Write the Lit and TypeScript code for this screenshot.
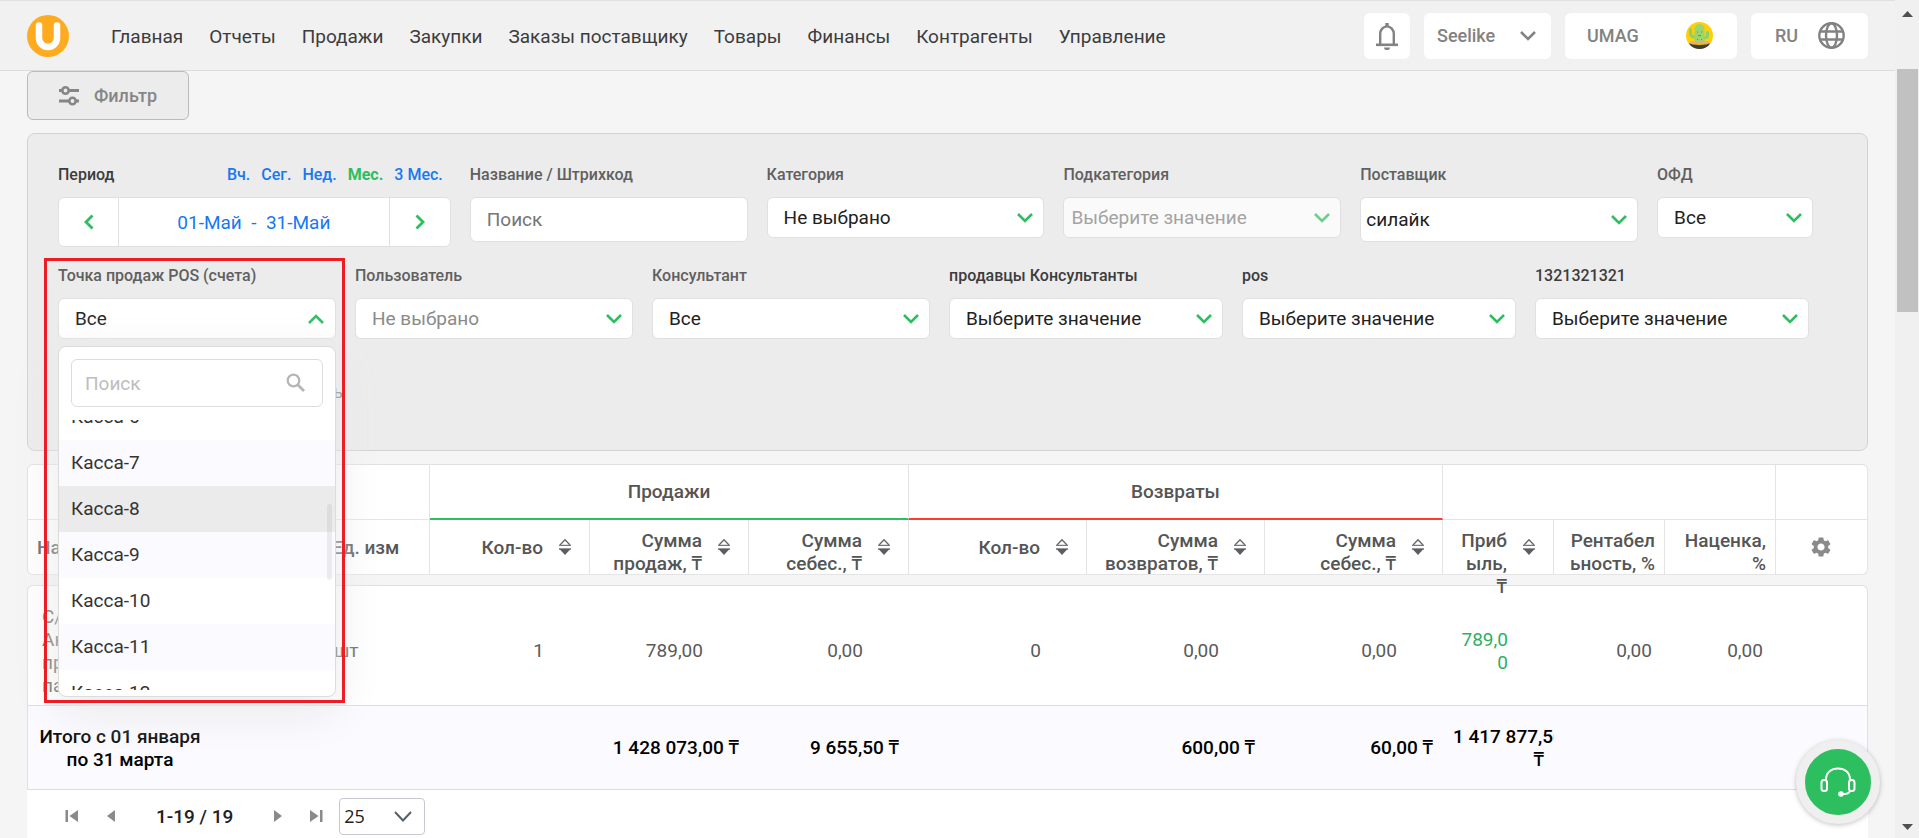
import { LitElement, html, css, svg, nothing } from "lit";
import { customElement, property, query } from "lit/decorators.js";
import { classMap } from "lit/directives/class-map.js";

const chevron = (up = false) => html`
  <svg class="chevron" width="16" height="10" viewBox="0 0 16 10" fill="none" stroke="currentColor" stroke-width="2.6" aria-hidden="true">
    <path d=${up ? "M1 9 8 2l7 7" : "M1 1l7 7 7-7"} />
  </svg>`;

const controlStyles = css`
  * {
    box-sizing: border-box;
  }
  button,
  select,
  input {
    font: inherit;
    color: inherit;
    margin: 0;
  }
  button {
    cursor: pointer;
  }
  .label {
    display: block;
    margin-bottom: 12px;
    font-size: 16px;
    line-height: 20px;
    font-weight: 500;
    color: #606060;
    white-space: nowrap;
  }
  .label.dark {
    color: #3c3c3c;
  }
  .control {
    display: block;
    width: 100%;
    height: 41px;
    padding: 0 16px;
    border: 1px solid #e0e0e0;
    border-radius: 6px;
    background: #fff;
    color: #212121;
    font-size: 19px;
    text-align: left;
    appearance: none;
  }
`;

@customElement("select-field")
class SelectField extends LitElement {
  @property() label = "";
  @property() value = "";
  @property({ type: Boolean }) dark = false;
  @property({ type: Boolean }) muted = false;
  @property({ type: Boolean }) tall = false;
  @property({ type: Boolean }) disabled = false;

  static styles = [
    controlStyles,
    css`
      :host {
        display: block;
        min-width: 0;
      }
      .box {
        display: grid;
        align-items: center;
      }
      .box > * {
        grid-area: 1 / 1;
      }
      .chevron {
        justify-self: end;
        margin-right: 11px;
        color: #2dbe60;
        pointer-events: none;
      }
      .muted {
        color: #8a8a8a;
      }
      .tall {
        height: 45px;
        padding: 0 5px;
      }
      .control:disabled {
        padding: 0 7px;
        background: #fafafa;
        color: #a3a3a3;
        opacity: 1;
      }
      .control:disabled + .chevron {
        opacity: 0.7;
      }
    `,
  ];

  render() {
    return html`
      <label class=${classMap({ label: true, dark: this.dark })} for="s">${this.label}</label>
      <div class="box">
        <select id="s" class=${classMap({ control: true, muted: this.muted, tall: this.tall })} ?disabled=${this.disabled}>
          <option>${this.value}</option>
        </select>
        ${chevron()}
      </div>
    `;
  }
}

@customElement("pos-field")
class PosField extends LitElement {
  @query(".list") list!: HTMLElement;

  options = [6, 7, 8, 9, 10, 11, 12].map((n) => `Касса-${n}`);

  static styles = [
    controlStyles,
    css`
      :host {
        display: block;
        position: relative;
        min-width: 0;
      }
      .toggle {
        display: flex;
        align-items: center;
        justify-content: space-between;
        padding-right: 11px;
      }
      .chevron {
        color: #2dbe60;
      }
      .menu {
        position: absolute;
        z-index: 2;
        top: 80px;
        left: 0;
        right: 0;
        padding: 12px 0 6px;
        border: 1px solid #dcdcdc;
        border-radius: 8px;
        background: #fff;
        box-shadow: 0 12px 50px #e9e9e9;
      }
      .search {
        display: flex;
        align-items: center;
        height: 48px;
        margin: 0 12px 13px;
        padding: 0 16px 0 13px;
        border: 1px solid #dcdcdc;
        border-radius: 6px;
      }
      .search input {
        flex: 1;
        min-width: 0;
        padding: 0;
        border: 0;
        outline: 0;
        background: none;
        font-size: 19px;
      }
      .search input::placeholder {
        color: #bdbdbd;
        opacity: 1;
      }
      .list {
        height: 270px;
        margin: 0;
        padding: 0;
        overflow-y: scroll;
        scrollbar-width: none;
        list-style: none;
      }
      .option {
        height: 46px;
        padding: 0 12px;
        font-size: 19px;
        line-height: 46px;
        color: #333;
      }
      .option:nth-child(even) {
        background: #fafaff;
      }
      .option.active {
        background: #ebebeb;
      }
      .thumb {
        position: absolute;
        top: 157px;
        right: 3px;
        width: 5px;
        height: 76px;
        border-radius: 3px;
        background: rgba(120, 120, 130, 0.12);
      }
      .highlight {
        position: absolute;
        z-index: 3;
        inset: -8px -9px auto -14px;
        height: 445px;
        border: 3px solid #ee1c25;
        pointer-events: none;
      }
    `,
  ];

  firstUpdated() {
    this.list.scrollTop = 26;
  }

  render() {
    return html`
      <label class="label" for="pos">Точка продаж POS (счета)</label>
      <button id="pos" class="control toggle" aria-expanded="true">Все ${chevron(true)}</button>
      <div class="menu">
        <div class="search">
          <input type="text" placeholder="Поиск" aria-label="Поиск" />
          <svg width="20" height="20" viewBox="0 0 20 20" fill="none" stroke="#b5b5b5" aria-hidden="true">
            <circle cx="7.5" cy="7.5" r="5.8" stroke-width="2.2" />
            <path d="M11.8 11.8 18 18" stroke-width="2.8" />
          </svg>
        </div>
        <ul class="list" role="listbox" aria-label="Точка продаж POS (счета)">
          ${this.options.map(
            (o) => html`<li role="option" class=${classMap({ option: true, active: o === "Касса-8" })}>${o}</li>`
          )}
        </ul>
        <div class="thumb"></div>
      </div>
      <div class="highlight"></div>
    `;
  }
}

interface Column {
  width: number;
  title: string;
  sort?: boolean;
  value: string;
  total: string;
  kind?: string;
}

const columns: Column[] = [
  { width: 160, title: "Кол-во", sort: true, value: "1", total: "" },
  { width: 159, title: "Сумма продаж, ₸", sort: true, value: "789,00", total: "1 428 073,00 ₸" },
  { width: 160, title: "Сумма себес., ₸", sort: true, value: "0,00", total: "9 655,50 ₸" },
  { width: 178, title: "Кол-во", sort: true, value: "0", total: "" },
  { width: 178, title: "Сумма возвратов, ₸", sort: true, value: "0,00", total: "600,00 ₸" },
  { width: 178, title: "Сумма себес., ₸", sort: true, value: "0,00", total: "60,00 ₸" },
  { width: 111, title: "Прибыль, ₸", sort: true, value: "789,00", total: "1 417 877,50 ₸", kind: "profit" },
  { width: 111, title: "Рентабельность, %", value: "0,00", total: "", kind: "plain" },
  { width: 111, title: "Наценка, %", value: "0,00", total: "", kind: "plain" },
];

const widths = [271, 132, ...columns.map((c) => c.width), 92];
const totalWidth = widths.reduce((a, b) => a + b, 0);

const sortIcon = html`
  <svg class="sort" width="14" height="18" viewBox="0 0 14 18" aria-hidden="true">
    <path d="M2 7 7 1.8 12 7" fill="none" stroke="#66666c" stroke-width="1.3" />
    <path d="M1 7.3h12M1 11h12" stroke="#77777d" stroke-width="1.3" />
    <path d="M1.5 11h11L7 17z" fill="#5c5c64" />
  </svg>`;

@customElement("sales-table")
class SalesTable extends LitElement {
  static styles = [
    controlStyles,
    css`
      :host {
        display: block;
      }
      table {
        width: 100%;
        table-layout: fixed;
        border-collapse: separate;
        border-spacing: 0;
        font-size: 19px;
        line-height: 23px;
        color: #5a5a5a;
      }
      th,
      td {
        padding: 0;
        background: #fff;
        font-weight: 400;
        overflow-wrap: anywhere;
      }
      th {
        font-weight: 500;
        color: #555;
      }
      .groups th {
        height: 56px;
        border-top: 1px solid #e0e0e0;
        border-bottom: 1px solid #e4e4e4;
        border-right: 1px solid #e4e4e4;
      }
      .groups th:first-child {
        border-left: 1px solid #e0e0e0;
        border-top-left-radius: 6px;
      }
      .groups th:last-child {
        border-top-right-radius: 6px;
      }
      .groups .sales {
        border-bottom: 2px solid #2dbe60;
      }
      .groups .returns {
        border-bottom: 2px solid #ff3b30;
      }
      .heads th {
        border-bottom: 1px solid #e4e4e4;
        border-right: 1px solid #e4e4e4;
      }
      .heads th:first-child {
        border-right: 0;
        border-left: 1px solid #e0e0e0;
        border-bottom-left-radius: 6px;
      }
      .heads th:last-child {
        border-bottom-right-radius: 6px;
      }
      .head {
        display: flex;
        align-items: center;
        justify-content: flex-end;
        gap: 15px;
        height: 54px;
        padding: 0 17px 0 12px;
        text-align: right;
      }
      .head span {
        align-self: flex-start;
        flex: 1;
        min-width: 0;
        padding-top: 9px;
      }
      .head.single span {
        align-self: center;
        padding-top: 0;
      }
      .head.plain {
        padding-right: 9px;
      }
      .head.start {
        padding-left: 9px;
        text-align: left;
      }
      .head.units {
        padding: 0 0 0 34px;
      }
      .sort {
        flex: none;
      }
      .gap td {
        height: 10px;
        background: none;
      }
      .row td {
        height: 121px;
        border-top: 1px solid #e0e0e0;
        border-bottom: 1px solid #dcdce0;
      }
      .row td:first-child {
        padding: 10px 0 0 14px;
        border-left: 1px solid #e0e0e0;
        border-top-left-radius: 6px;
      }
      .row td:last-child {
        border-right: 1px solid #e0e0e0;
        border-top-right-radius: 6px;
      }
      .value {
        padding: 10px 46px 0 15px;
        text-align: right;
      }
      .value.plain {
        padding-right: 13px;
      }
      .value.profit {
        color: #2eaf66;
      }
      .unit {
        padding: 10px 0 0 36px;
      }
      .totals th,
      .totals td {
        height: 84px;
        padding: 0 10px;
        border-bottom: 1px solid #dcdce0;
        background: #fafaff;
        color: #000;
        font-weight: 500;
        text-align: right;
        overflow: hidden;
      }
      .totals th {
        padding: 0 9px;
        border-left: 1px solid #e0e0e0;
        text-align: left;
      }
      .totals .period {
        display: inline-block;
        width: 166px;
        text-align: center;
      }
      .totals td:last-child {
        border-right: 1px solid #e0e0e0;
      }
      .totals td {
        overflow-wrap: normal;
      }
      .gear {
        display: grid;
        place-items: center;
        width: 100%;
        height: 54px;
        padding: 0;
        border: 0;
        background: none;
      }
    `,
  ];

  render() {
    return html`
      <table>
        <colgroup>
          ${widths.map((w) => html`<col style="width:${(w / totalWidth) * 100}%" />`)}
        </colgroup>
        <thead>
          <tr class="groups">
            <th colspan="2"></th>
            <th colspan="3" class="sales">Продажи</th>
            <th colspan="3" class="returns">Возвраты</th>
            <th colspan="3"></th>
            <th></th>
          </tr>
          <tr class="heads">
            <th><div class="head single start"><span>На</span></div></th>
            <th><div class="head single start units"><span>Ед. изм</span></div></th>
            ${columns.map(
              (c) => html`<th>
                <div class=${classMap({ head: true, single: !c.title.includes(" "), plain: !c.sort })}>
                  <span>${c.title}</span>${c.sort ? sortIcon : nothing}
                </div>
              </th>`
            )}
            <th>
              <button class="gear" aria-label="Настройки">
                <svg width="24" height="24" viewBox="0 0 24 24" fill="#8a8a8a">
                  <path d="M19.14 12.94c.04-.3.06-.61.06-.94 0-.32-.02-.64-.07-.94l2.03-1.58c.18-.14.23-.41.12-.61l-1.92-3.32c-.12-.22-.37-.29-.59-.22l-2.39.96c-.5-.38-1.03-.7-1.62-.94l-.36-2.54c-.04-.24-.24-.41-.48-.41h-3.84c-.24 0-.43.17-.47.41l-.36 2.54c-.59.24-1.13.57-1.62.94l-2.39-.96c-.22-.08-.47 0-.59.22L2.74 8.87c-.12.21-.08.47.12.61l2.03 1.58c-.05.3-.09.63-.09.94s.02.64.07.94l-2.03 1.58c-.18.14-.23.41-.12.61l1.92 3.32c.12.22.37.29.59.22l2.39-.96c.5.38 1.03.7 1.62.94l.36 2.54c.05.24.24.41.48.41h3.84c.24 0 .44-.17.47-.41l.36-2.54c.59-.24 1.13-.56 1.62-.94l2.39.96c.22.08.47 0 .59-.22l1.92-3.32c.12-.22.07-.47-.12-.61l-2.01-1.58zM12 15.6c-1.98 0-3.6-1.62-3.6-3.6s1.62-3.6 3.6-3.6 3.6 1.62 3.6 3.6-1.62 3.6-3.6 3.6z" />
                </svg>
              </button>
            </th>
          </tr>
        </thead>
        <tbody>
          <tr class="gap"><td colspan="12"></td></tr>
          <tr class="row">
            <td>С/<br />Ак<br />пр<br />па</td>
            <td><div class="unit">шт</div></td>
            ${columns.map((c) => html`<td><div class="value ${c.kind ?? ""}">${c.value}</div></td>`)}
            <td></td>
          </tr>
        </tbody>
        <tfoot>
          <tr class="totals">
            <th colspan="2"><span class="period">Итого с 01 января по 31 марта</span></th>
            ${columns.map((c) => html`<td>${c.total.replace(/ (?=\d)/g, "\u00a0")}</td>`)}
            <td></td>
          </tr>
        </tfoot>
      </table>
    `;
  }
}

@customElement("app-root")
class AppRoot extends LitElement {
  nav = ["Главная", "Отчеты", "Продажи", "Закупки", "Заказы поставщику", "Товары", "Финансы", "Контрагенты", "Управление"];

  static styles = [
    controlStyles,
    css`
      :host {
        display: grid;
        grid-template-columns: minmax(0, 1fr) 24px;
        height: 100vh;
        overflow: hidden;
        background: #f5f5f5;
        font-family: Roboto, "Noto Sans", sans-serif;
        font-size: 18px;
        color: #3c3c3c;
      }
      .page {
        display: flex;
        flex-direction: column;
        min-height: 0;
        overflow: hidden;
      }
      header {
        display: flex;
        align-items: center;
        flex: none;
        height: 71px;
        padding: 0 27px;
        border-top: 1px solid #e0e0e0;
        border-bottom: 1px solid #dcdcdc;
        background: #f1f1f1;
      }
      .logo {
        display: block;
        margin-right: 42px;
      }
      nav {
        display: flex;
        flex: 1;
        gap: 26px;
        padding-top: 2px;
        font-size: 19px;
        white-space: nowrap;
      }
      nav a {
        color: #3c3c3c;
        text-decoration: none;
      }
      .tools {
        display: flex;
        gap: 14px;
      }
      .tool {
        display: flex;
        align-items: center;
        justify-content: space-between;
        height: 46px;
        border: 0;
        border-radius: 6px;
        background: #fff;
        color: #828282;
        font-weight: 500;
      }
      .bell {
        width: 46px;
        padding: 0 12px;
      }
      .shop {
        width: 127px;
        padding: 0 15px 0 13px;
      }
      .user {
        width: 172px;
        padding: 0 24px 0 22px;
      }
      .lang {
        width: 117px;
        padding: 0 23px 0 24px;
      }
      main {
        flex: none;
        padding: 0 27px;
      }
      .filter-toggle {
        display: flex;
        align-items: center;
        gap: 15px;
        height: 49px;
        padding: 0 31px;
        border: 1px solid #bbb;
        border-radius: 6px;
        background: #ececec;
        color: #868686;
        font-weight: 500;
      }
      .filters {
        display: grid;
        gap: 19px;
        margin-top: 13px;
        padding: 31px 54px 47px 30px;
        border: 1px solid #d2d2d2;
        border-radius: 8px;
        background: #ececec;
      }
      .fields {
        display: grid;
        column-gap: 19px;
        align-items: start;
      }
      .first {
        grid-template-columns: 393fr 278fr 278fr 278fr 278fr 156fr;
      }
      .second {
        grid-template-columns: 278fr 278fr 278fr 274fr 274fr 274fr;
        padding-right: 4px;
      }
      .extra {
        display: flex;
        align-items: center;
        justify-content: space-between;
        width: 285px;
        height: 24px;
        margin: 21px 0 0;
        color: #757575;
      }
      .extra input {
        width: 18px;
        height: 18px;
      }
      .period-head {
        display: flex;
        justify-content: space-between;
        padding-right: 8px;
      }
      .quick {
        display: flex;
        gap: 11px;
        height: 20px;
      }
      .quick button {
        padding: 0;
        border: 0;
        background: none;
        color: #1679f3;
        font-size: 16px;
        line-height: 20px;
        font-weight: 500;
      }
      .quick .on {
        color: #2dbe60;
        font-weight: 700;
      }
      .range {
        display: grid;
        grid-template-columns: 59px 1fr 60px;
        height: 50px;
        border: 1px solid #e0e0e0;
        border-radius: 6px;
        background: #fff;
      }
      .range button {
        display: grid;
        place-items: center;
        padding: 0;
        border: 0;
        background: none;
        color: #2dbe60;
      }
      .range .dates {
        border: solid #e0e0e0;
        border-width: 0 1px;
        color: #1679f3;
        font-size: 19px;
        white-space: pre;
      }
      .text {
        height: 45px;
      }
      .text::placeholder {
        color: #757575;
        opacity: 1;
      }
      sales-table {
        margin-top: 13px;
      }
      .pager {
        display: flex;
        align-items: center;
        height: 60px;
        padding: 0 0 8px 37px;
        background: #fff;
        color: #212121;
      }
      .pager button {
        display: grid;
        place-items: center;
        width: 16px;
        height: 24px;
        padding: 0;
        border: 0;
        background: none;
      }
      .pager .prev {
        margin-left: 23px;
      }
      .pager .next {
        margin-left: 37px;
      }
      .pager .last {
        margin: 0 15px 0 22px;
      }
      .count {
        margin-left: 37px;
        font-size: 19px;
        font-weight: 500;
      }
      .size {
        display: grid;
        align-items: center;
        width: 86px;
      }
      .size > * {
        grid-area: 1 / 1;
      }
      .size .control {
        height: 37px;
        padding: 0 4px;
        border-color: #c8c8d0;
        border-radius: 4px;
        font-family: "Open Sans", "Noto Sans", sans-serif;
        font-size: 18px;
      }
      .size svg {
        justify-self: end;
        margin-right: 13px;
        pointer-events: none;
      }
      .scroll {
        display: flex;
        flex-direction: column;
        align-items: center;
        padding: 11px 1px 8px 2px;
        background: #f0f0f0;
      }
      .bar {
        width: 100%;
        height: 243px;
        margin: 52px 0 auto;
        background: #c1c1c1;
      }
      .help {
        position: fixed;
        right: 39px;
        bottom: 14px;
        z-index: 4;
        display: grid;
        place-items: center;
        width: 84px;
        height: 84px;
        border: 9px solid #efefef;
        border-radius: 50%;
        background: #2dbe60;
        box-shadow: 0 1px 5px rgba(0, 0, 0, 0.25);
      }
    `,
  ];

  render() {
    const arrow = (d: string) => html`<svg width="16" height="16" viewBox="0 0 16 16" fill="#8a8a8a">${svg`<path d=${d} />`}</svg>`;
    return html`
      <div class="page">
        <header>
          <svg class="logo" width="42" height="42" viewBox="0 0 42 42" role="img" aria-label="UMAG">
            <circle cx="21" cy="21" r="21" fill="#ffab1f" />
            <path d="M12 10.5v12.5a9 9 0 0 0 18 0V10.5" fill="none" stroke="#fff" stroke-width="6.5" stroke-linecap="round" />
          </svg>
          <nav>${this.nav.map((n) => html`<a href="#">${n}</a>`)}</nav>
          <div class="tools">
            <button class="tool bell" aria-label="Уведомления">
              <svg width="22" height="28" viewBox="0 0 22 28" fill="none" stroke="#828282" stroke-width="2.4">
                <path d="M4.2 22V12a6.8 7.6 0 0 1 13.6 0v10" />
                <path d="M0 22.8h22" stroke-width="2.6" />
                <path d="M11 4V1" stroke-width="3.4" />
                <path d="M8 25.4h6c0 1.6-1.2 2.6-3 2.6s-3-1-3-2.6z" fill="#828282" stroke="none" />
              </svg>
            </button>
            <button class="tool shop">Seelike ${chevron()}</button>
            <button class="tool user">
              UMAG
              <svg width="27" height="27" viewBox="0 0 27 27" aria-hidden="true">
                <defs><clipPath id="a"><circle cx="13.5" cy="13.5" r="13.5" /></clipPath></defs>
                <g clip-path="url(#a)">
                  <path fill="#ffcf0a" d="M0 0h27v27H0z" />
                  <path d="M4.500 7.500v3.500c0 3 2 4 5 4M21.500 10.500v2.500c0 2-1.500 3-4.500 3" fill="none" stroke="#8fcf63" stroke-width="3" stroke-linecap="round" />
                  <path d="M8.500 22V7a5 5 0 0 1 10 0v15z" fill="#9ad66d" />
                  <path d="M11.500 9.500v1M15.500 9.500v1M12 13.500h3M11.500 17v1M15.500 17v1" stroke="#4a8a3a" stroke-width="0.8" />
                  <path d="M4 19.500h19v2.500H4z" fill="#e8ad74" />
                  <path d="M3 21c3 2.500 18 2.500 21 0l-2 6H5z" fill="#3b3b42" />
                </g>
              </svg>
            </button>
            <button class="tool lang">
              RU
              <svg width="27" height="27" viewBox="0 0 27 27" fill="none" stroke="#828282" stroke-width="2.4" aria-hidden="true">
                <circle cx="13.5" cy="13.5" r="12.2" />
                <ellipse cx="13.5" cy="13.5" rx="5.5" ry="12.2" />
                <path d="M2 9.5h23M2 17.5h23" />
              </svg>
            </button>
          </div>
        </header>
        <main>
          <button class="filter-toggle">
            <svg width="20" height="20" viewBox="0 0 20 20" fill="none" stroke="#868686" stroke-width="3" aria-hidden="true">
              <circle cx="6.5" cy="4.5" r="3.2" stroke-width="2.6" />
              <path d="M0 4.5h3M10 4.500h10M0 15h10M17 15h3" />
              <circle cx="13.5" cy="15" r="3.2" stroke-width="2.6" />
            </svg>
            Фильтр
          </button>
          <section class="filters">
            <div class="fields first">
              <div>
                <div class="period-head">
                  <span class="label dark">Период</span>
                  <div class="quick">
                    ${["Вч.", "Сег.", "Нед.", "Мес.", "3 Мес."].map(
                      (q) => html`<button class=${classMap({ on: q === "Мес." })}>${q}</button>`
                    )}
                  </div>
                </div>
                <div class="range">
                  <button aria-label="Назад">
                    <svg width="10" height="16" viewBox="0 0 10 16" fill="none" stroke="currentColor" stroke-width="2.8"><path d="M8.5 1.5 2 8l6.5 6.5" /></svg>
                  </button>
                  <button class="dates">01-Май  -  31-Май</button>
                  <button aria-label="Вперед">
                    <svg width="10" height="16" viewBox="0 0 10 16" fill="none" stroke="currentColor" stroke-width="2.8"><path d="M1.5 1.5 8 8l-6.5 6.5" /></svg>
                  </button>
                </div>
              </div>
              <div>
                <label class="label" for="name">Название / Штрихкод</label>
                <input id="name" class="control text" type="text" placeholder="Поиск" />
              </div>
              <select-field label="Категория" value="Не выбрано"></select-field>
              <select-field label="Подкатегория" value="Выберите значение" disabled></select-field>
              <select-field label="Поставщик" value="силайк" tall></select-field>
              <select-field label="ОФД" value="Все"></select-field>
            </div>
            <div class="fields second">
              <pos-field></pos-field>
              <select-field label="Пользователь" value="Не выбрано" muted></select-field>
              <select-field label="Консультант" value="Все"></select-field>
              <select-field dark label="продавцы Консультанты" value="Выберите значение"></select-field>
              <select-field dark label="pos" value="Выберите значение"></select-field>
              <select-field dark label="1321321321" value="Выберите значение"></select-field>
            </div>
            <label class="extra"><input type="checkbox" />ь</label>
          </section>
          <sales-table></sales-table>
          <div class="pager">
            <button class="start" aria-label="В начало">${arrow("M1.500 2h2.500v12H1.500zM14 2v12L5.500 8z")}</button>
            <button class="prev" aria-label="Назад">${arrow("M12 2v12L4 8z")}</button>
            <span class="count">1-19 / 19</span>
            <button class="next" aria-label="Вперед">${arrow("M4 2v12l8-6z")}</button>
            <button class="last" aria-label="В конец">${arrow("M2 2v12l8.500-6zM12 2h2.500v12H12z")}</button>
            <div class="size">
              <select class="control" aria-label="Строк на странице"><option>25</option></select>
              <svg width="18" height="11" viewBox="0 0 18 11" fill="none" stroke="#55606a" stroke-width="2" aria-hidden="true"><path d="M1 1l8 8.500L17 1" /></svg>
            </div>
          </div>
        </main>
        <button class="help" aria-label="Поддержка">
          <svg width="36" height="30" viewBox="0 0 36 30" fill="none" stroke="#fff" stroke-width="2" stroke-linecap="round" aria-hidden="true">
            <path d="M6 12.500C6 5 11.500 1.500 18 1.500S30 5 30 12.500" />
            <rect x="1.500" y="13" width="5.500" height="11" rx="2.500" />
            <rect x="29" y="13" width="5.500" height="11" rx="2.500" />
            <path d="M30 24c-1 2.500-3 3-9 3" />
            <circle cx="21" cy="27" r="1.800" fill="#fff" />
          </svg>
        </button>
      </div>
      <div class="scroll" aria-hidden="true">
        <svg width="11" height="6" viewBox="0 0 11 6"><path d="M0 6l5.500-6L11 6z" fill="#505050" /></svg>
        <div class="bar"></div>
        <svg width="11" height="6" viewBox="0 0 11 6"><path d="M0 0l5.500 6L11 0z" fill="#505050" /></svg>
      </div>
    `;
  }
}
